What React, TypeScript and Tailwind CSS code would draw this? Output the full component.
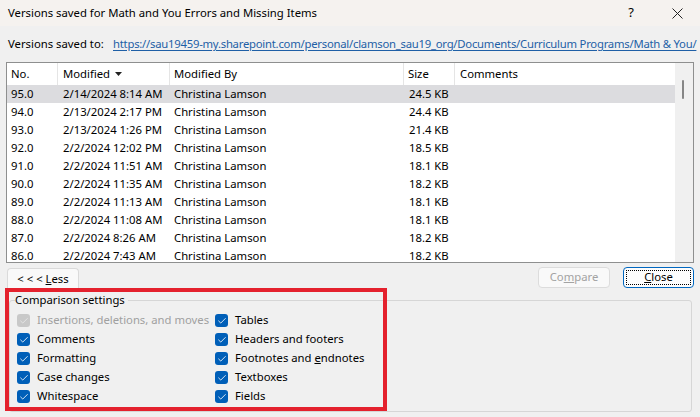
import { Check } from 'lucide-react';

const rows = [
  ['95.0', '2/14/2024 8:14 AM', '24.5 KB'],
  ['94.0', '2/13/2024 2:17 PM', '24.4 KB'],
  ['93.0', '2/13/2024 1:26 PM', '21.4 KB'],
  ['92.0', '2/2/2024 12:02 PM', '18.5 KB'],
  ['91.0', '2/2/2024 11:51 AM', '18.1 KB'],
  ['90.0', '2/2/2024 11:35 AM', '18.2 KB'],
  ['89.0', '2/2/2024 11:13 AM', '18.1 KB'],
  ['88.0', '2/2/2024 11:08 AM', '18.1 KB'],
  ['87.0', '2/2/2024 8:26 AM', '18.2 KB'],
  ['86.0', '2/2/2024 7:43 AM', '18.2 KB'],
];

const leftOpts = ['Comments', 'Formatting', 'Case changes', 'Whitespace'];
const rightOpts: [string, string, string][] = [
  ['Tables', '', ''],
  ['Headers and footers', '', ''],
  ['Footnotes and ', 'e', 'ndnotes'],
  ['Textboxes', '', ''],
  ['Fields', '', ''],
];

function Box({ disabled }: { disabled?: boolean }) {
  return (
    <span className={`flex h-[13px] w-[13px] shrink-0 items-center justify-center rounded-[3px] ${disabled ? 'bg-[#c8c8c8]' : 'bg-[#005fb8]'}`}>
      <Check size={10} strokeWidth={2} className={disabled ? 'text-[#e8e8e8]' : 'text-white'} />
    </span>
  );
}

function Opt({ children, disabled }: { children: React.ReactNode; disabled?: boolean }) {
  return (
    <div className="flex h-[19px] items-center gap-[7px] whitespace-nowrap">
      <Box disabled={disabled} />
      <span className={disabled ? 'text-[#a0a0a0]' : 'text-black'}>{children}</span>
    </div>
  );
}

export default function App() {
  return (
    <div className="h-[417px] w-[700px] overflow-hidden bg-[#f0f0f0] text-[11.3px] text-black" style={{ fontFamily: '"Noto Sans", sans-serif' }}>
      <div className="flex h-[26px] items-center bg-[#f5f2ef] pl-2">
        <span className="flex-1 leading-none">Versions saved for Math and You Errors and Missing Items</span>
        <span className="w-[46px] text-center text-[13px]">?</span>
        <span className="flex w-[46px] items-center justify-center">
          <svg width="11" height="11" viewBox="0 0 11 11"><path d="M0.5 0.5L10.5 10.5M10.5 0.5L0.5 10.5" stroke="#222" strokeWidth="1" /></svg>
        </span>
      </div>

      <div className="flex h-[34px] items-center pl-2 pt-[2px]">
        <span className="w-[105px] whitespace-nowrap">Versions saved to:</span>
        <span className="whitespace-nowrap tracking-[-0.24px] text-[#1e5fa6] underline underline-offset-2">https://sau19459-my.sharepoint.com/personal/clamson_sau19_org/Documents/Curriculum Programs/Math &amp; You/</span>
      </div>

      <div className="mx-[6px] mt-[2px] flex h-[201px] overflow-hidden border border-[#8e8f8f] bg-white">
        <div className="flex-1 overflow-hidden">
          <div className="flex h-[22px] items-center">
            <div className="h-full w-[51px] border-r border-[#e5e5e5] pl-[4px] leading-[22px]">No.</div>
            <div className="flex h-full w-[112px] items-center gap-[5px] border-r border-[#e5e5e5] pl-[5px]">
              Modified
              <svg width="7" height="4" viewBox="0 0 7 4"><path d="M0 0H7L3.5 4Z" fill="#222" /></svg>
            </div>
            <div className="h-full w-[234px] border-r border-[#e5e5e5] pl-[4px] leading-[22px]">Modified By</div>
            <div className="h-full w-[51px] border-r border-[#e5e5e5] pl-[4px] leading-[22px]">Size</div>
            <div className="h-full flex-1 pl-[5px] leading-[22px]">Comments</div>
          </div>
          {rows.map((r, i) => (
            <div key={r[0]} className={`flex h-[18px] items-center whitespace-nowrap ${i === 0 ? 'bg-[#dcdcdf]' : ''}`}>
              <div className="w-[51px] pl-[4px]">{r[0]}</div>
              <div className="w-[112px] pl-[5px]">{r[1]}</div>
              <div className="w-[234px] pl-[4px]">Christina Lamson</div>
              <div className="w-[51px] pl-[5px]">{r[2]}</div>
            </div>
          ))}
        </div>
        <div className="w-[18px] bg-[#f0f0f0] pt-[17px]">
          <div className="ml-[7px] h-[19px] w-[2px] rounded-full bg-[#868686]" />
        </div>
      </div>

      <div className="relative mx-[6px] mt-[4px] flex h-[20px] items-start">
        <div className="ml-[1px] mt-[1px] flex h-[22px] w-[72px] items-start justify-center rounded-t-[4px] border border-b-0 border-[#dadada] bg-[#f9f9f9] pt-[2px]">
          <span>&lt; &lt; &lt; <span className="underline">L</span>ess</span>
        </div>
        <div className="flex-1" />
        <div className="flex h-[21px] w-[72px] items-center justify-center rounded-[4px] border border-[#dcdcdc] bg-[#f9f9f9] text-[#a3a3a3]">
          Co<span className="underline">m</span>pare
        </div>
        <div className="ml-[13px] flex h-[21px] w-[71px] items-center justify-center rounded-[4px] border border-[#0067c0] bg-[#fdfdfd] p-[2px]">
          <div className="flex h-full w-full items-center justify-center border border-dotted border-black">
            <span className="underline">C</span>lose
          </div>
        </div>
      </div>

      <div className="relative mx-[5px] mt-[1px] h-[123px]">
        <div className="absolute left-[4px] right-[3px] top-[12px] h-[112px] rounded-[3px] border border-[#d6d6d6]" />
        <div className="absolute inset-y-0 left-0 w-[382px] border-4 border-[#e4212d]" />
        <div className="relative pl-[10px] pt-[4px]">
          <div className="h-[16px] w-fit bg-[#f0f0f0] pr-[3px] leading-[16px]">Comparison settings</div>
          <div className="mt-[3px] flex pl-[2px]">
            <div className="w-[198px]">
              <Opt disabled>Insertions, deletions, and moves</Opt>
              {leftOpts.map((o) => (
                <Opt key={o}>{o}</Opt>
              ))}
            </div>
            <div>
              {rightOpts.map(([a, u, b]) => (
                <Opt key={a}>
                  {a}
                  {u && <span className="underline">{u}</span>}
                  {b}
                </Opt>
              ))}
            </div>
          </div>
        </div>
      </div>
    </div>
  );
}
